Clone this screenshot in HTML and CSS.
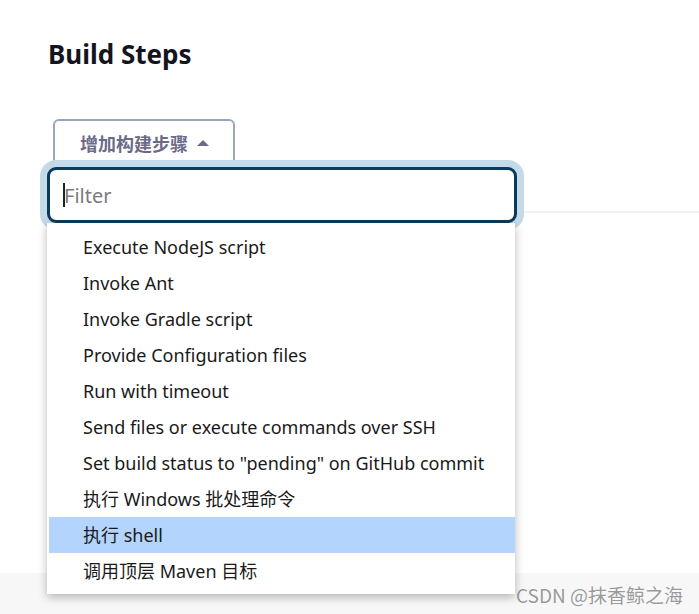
FILE: index.html
```html
<!DOCTYPE html>
<html lang="zh-CN">
<head>
<meta charset="utf-8">
<link rel="stylesheet" href="styles.css">
</head>
<body>
<div class="page">
  <h2 class="title">Build Steps</h2>
  <div class="add-step">
    <button class="add-btn" type="button">增加构建步骤 <span class="caret"></span></button>
    <div class="menu">
      <div class="filter"><span class="cursor"></span><span class="placeholder">Filter</span></div>
      <ul class="list">
        <li>Execute NodeJS script</li>
        <li>Invoke Ant</li>
        <li>Invoke Gradle script</li>
        <li>Provide Configuration files</li>
        <li>Run with timeout</li>
        <li>Send files or execute commands over SSH</li>
        <li>Set build status to "pending" on GitHub commit</li>
        <li>执行 Windows 批处理命令</li>
        <li class="active">执行 shell</li>
        <li>调用顶层 Maven 目标</li>
      </ul>
    </div>
  </div>
  <div class="divider"></div>
  <div class="spacer"></div>
  <div class="footer"></div>
</div>
<div class="watermark">CSDN @抹香鲸之海</div>
</body>
</html>
```
FILE: styles.css
```css
html, body {
  margin: 0;
  padding: 0;
  background: #ffffff;
  height: 100%;
  overflow: hidden;
}
body {
  font-family: "Noto Sans", "Noto Sans CJK SC", sans-serif;
  color: #1e1e28;
}
.page {
  display: flex;
  flex-direction: column;
  height: 614px;
}
.title {
  margin: 36px 0 0 48px;
  font-size: 26px;
  font-weight: 700;
  line-height: 37px;
  color: #14141f;
  font-family: "Noto Sans", "Noto Sans CJK SC", sans-serif;
}
.add-step {
  position: relative;
  margin: 46px 0 0 53px;
  align-self: flex-start;
}
.add-btn {
  display: flex;
  align-items: center;
  gap: 8px;
  width: 182px;
  height: 47px;
  padding: 0 0 0 25px;
  background: #ffffff;
  border: 2px solid #9aa8b5;
  border-radius: 6px;
  font-family: "Noto Sans CJK SC", sans-serif;
  font-size: 18px;
  font-weight: 700;
  color: #6b6b89;
}
.caret {
  width: 0;
  height: 0;
  border-left: 6px solid transparent;
  border-right: 6px solid transparent;
  border-bottom: 6px solid #6b6b89;
  margin-left: 1px;
}
.menu {
  position: absolute;
  left: -6px;
  top: 48px;
  width: 470px;
  z-index: 5;
}
.filter {
  position: relative;
  height: 50px;
  border: 3px solid #0b3a5c;
  border-radius: 9px;
  background: #fff;
  box-shadow: 0 0 0 7px #c3dbe8;
  display: flex;
  align-items: center;
  padding-left: 13px;
  z-index: 2;
}
.cursor {
  width: 2px;
  height: 24px;
  background: #222;
  margin-right: -1px;
}
.placeholder {
  font-size: 20px;
  color: #7a7a80;
  font-family: "Noto Sans", sans-serif;
}
.list {
  position: relative;
  z-index: 3;
  list-style: none;
  margin: 0 2px 0 0;
  padding: 6px 0 5px 2px;
  background: #fff;
  box-shadow: 0 3px 9px rgba(0, 0, 0, 0.28);
}
.list li {
  height: 36px;
  line-height: 36px;
  padding-left: 34px;
  font-size: 18px;
  color: #1a1a1a;
  font-family: "Noto Sans", "Noto Sans CJK SC", sans-serif;
}
.list li.active {
  background: #b3d4fc;
}
.divider {
  margin: 45px 0 0 48px;
  height: 2px;
  background: #f0f0f5;
}
.spacer {
  flex: 1;
}
.footer {
  height: 41px;
  background: #f7f7f8;
}
.watermark {
  position: absolute;
  right: 16px;
  bottom: 6px;
  font-family: "Noto Sans CJK SC", sans-serif;
  font-size: 19px;
  color: #9a9a9a;
  text-shadow: 0 0 2px #fff;
}
```
